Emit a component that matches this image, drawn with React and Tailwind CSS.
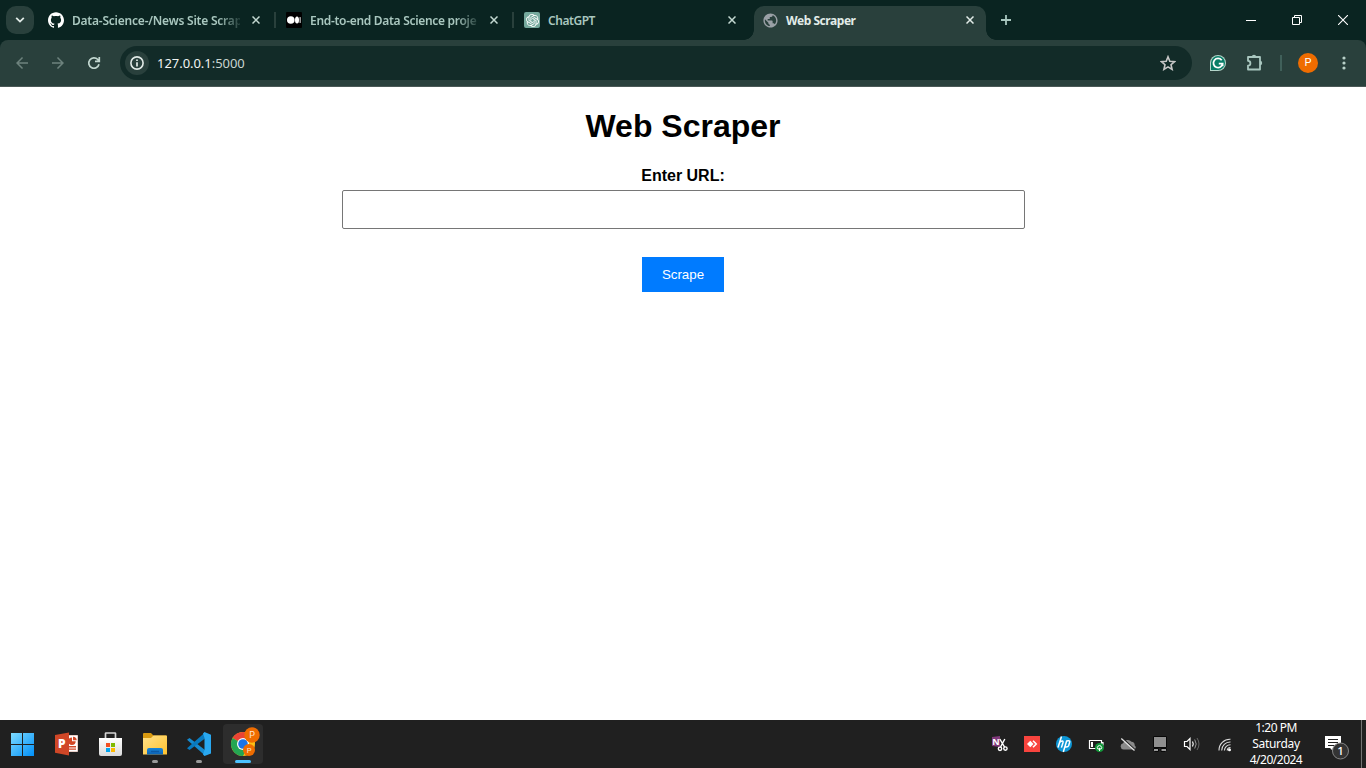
import React from 'react';
import { SiGithub, SiOpenai } from 'react-icons/si';
import { MdPublic, MdArrowBack, MdArrowForward } from 'react-icons/md';

const UI = "font-['Noto_Sans','Open_Sans',sans-serif]";

function Cross({ className }) {
  return (
    <svg width="8" height="8" viewBox="0 0 8 8" className={className}>
      <path d="M.5.5l7 7M7.5.5l-7 7" stroke="currentColor" strokeWidth="1.5" fill="none" />
    </svg>
  );
}

function Medium() {
  return (
    <svg width="16" height="16" viewBox="0 0 16 16">
      <rect width="16" height="16" rx="1" fill="#000" />
      <circle cx="4.8" cy="8" r="3.8" fill="#fff" />
      <ellipse cx="11" cy="8" rx="2" ry="3.6" fill="#fff" />
      <rect x="13.5" y="5" width="1.3" height="6" rx=".6" fill="#bbb" />
    </svg>
  );
}

function Tab({ icon, title, separator, titleClass }) {
  return (
    <div className="flex h-full w-[238px] items-center pl-[10px] text-[#a9c7bf]">
      <div className="flex size-4 shrink-0 items-center justify-center">{icon}</div>
      <div className={`mt-px ml-2 w-[168px] text-[12px] leading-[18px] font-semibold whitespace-nowrap ${titleClass}`}>{title}</div>
      <Cross className="ml-3 shrink-0 text-[#c3d8d1]" />
      <div className={`ml-[14px] h-4 w-[2px] shrink-0 ${separator ? 'bg-[#29403c]' : ''}`} />
    </div>
  );
}

function TabStrip() {
  return (
    <div className="flex h-10 shrink-0 bg-[#0a2421]">
      <div className="mt-[6px] mr-1 ml-[6px] flex size-7 items-center justify-center rounded-[10px] bg-[#29403c]">
        <svg width="10" height="6" viewBox="0 0 10 6"><path d="M1.2.8L5 4.6 8.8.8" fill="none" stroke="#e1eae7" strokeWidth="1.8" /></svg>
      </div>
      <Tab separator icon={<SiGithub size={16} color="#fff" />} title="Data-Science-/News Site Scrap" titleClass="tracking-[-0.22px] [mask-image:linear-gradient(to_right,black_146px,transparent_172px)]" />
      <Tab separator icon={<Medium />} title="End-to-end Data Science proje" titleClass="tracking-[-0.3px] [mask-image:linear-gradient(to_right,black_146px,transparent_172px)]" />
      <Tab icon={<div className="flex size-4 items-center justify-center rounded-[2px] bg-[#75a99d]"><SiOpenai size={13} color="#fff" /></div>} title="ChatGPT" titleClass="tracking-[-0.45px]" />
      <div className="mt-[6px] ml-[-8px] flex h-[34px] w-[252px] shrink-0">
        <div className="w-[10px] bg-[#29403c] [mask-image:radial-gradient(circle_at_0_24px,transparent_9.5px,black_10px)] [clip-path:inset(24px_0_0_0)]" />
        <div className="flex w-[232px] items-center rounded-t-[10px] bg-[#29403c] pb-[6px] pl-2">
          <MdPublic size={17} className="-ml-[0.5px] shrink-0 text-[#9aa0a6]" />
          <div className="mt-px ml-[7.5px] w-[168px] text-[12px] leading-[18px] font-bold tracking-[-0.45px] text-[#e2ece8]">Web Scraper</div>
          <Cross className="ml-3 text-[#e2ece8]" />
        </div>
        <div className="w-[10px] bg-[#29403c] [mask-image:radial-gradient(circle_at_10px_24px,transparent_9.5px,black_10px)] [clip-path:inset(24px_0_0_0)]" />
      </div>
      <div className="ml-[5px] flex w-[10px] items-center">
        <svg width="10" height="10" viewBox="0 0 10 10" className="shrink-0"><path d="M5 0v10M0 5h10" stroke="#a9c7bf" strokeWidth="1.8" /></svg>
      </div>
      <div className="ml-auto flex">
        <div className="flex w-[46px] items-center justify-center"><div className="h-px w-[10px] bg-white" /></div>
        <div className="flex w-[46px] items-center justify-center">
          <svg width="10" height="10" viewBox="0 0 10 10"><path d="M.5 2.5h7v7h-7zM2.5 2.5v-2h7v7h-2" fill="none" stroke="#fff" /></svg>
        </div>
        <div className="flex w-[46px] items-center justify-center">
          <svg width="10" height="10" viewBox="0 0 10 10"><path d="M0 0l10 10M10 0L0 10" stroke="#fff" strokeWidth="1.1" /></svg>
        </div>
      </div>
    </div>
  );
}

function Toolbar() {
  return (
    <div className="h-[47px] shrink-0 bg-[#0a2421]">
      <div className="flex h-full rounded-t-[8px] border-b border-[#4a5856] bg-[#29403c] pt-[6px]">
        <div className="flex h-[34px] w-[120px] items-center pl-[13px]">
          <MdArrowBack size={18} className="text-[#6d827d]" />
          <MdArrowForward size={18} className="ml-[18px] text-[#6d827d]" />
          <svg width="14" height="14" viewBox="0 0 14 14" className="ml-5">
            <path d="M12 8.3A5.2 5.2 0 1 1 10.8 3.5L12 4.8M12.3 1v4.4H8" fill="none" stroke="#c1d6cf" strokeWidth="1.7" />
          </svg>
        </div>
        <div className="flex h-[34px] w-[1072px] items-center rounded-full bg-[#122b28] pr-[16px] pl-[5px]">
          <div className="flex size-6 items-center justify-center rounded-full bg-[#29403c]">
            <svg width="14" height="14" viewBox="0 0 14 14"><circle cx="7" cy="7" r="6.1" fill="none" stroke="#e1eae7" strokeWidth="1.6" /><path d="M7 6.2v4.2M7 3.4v1.7" stroke="#e1eae7" strokeWidth="1.7" /></svg>
          </div>
          <div className="ml-2 text-[13px] leading-[18px] tracking-[-0.04px] text-[#f0f4f2]">127.0.0.1<span className="text-[#c9d5d1]">:5000</span></div>
          <svg width="16" height="16" viewBox="0 0 16 16" className="ml-auto">
            <path d="M8 1.8l1.8 4.4 4.8.4-3.6 3.1 1.1 4.7L8 11.9l-4.1 2.5L5 9.7 1.4 6.6l4.8-.4z" fill="none" stroke="#c7c7c7" strokeWidth="1.6" />
          </svg>
        </div>
        <div className="flex h-[34px] items-center">
          <svg width="16" height="16" viewBox="0 0 16 16" className="ml-[18px]">
            <path d="M0 16V8a8 8 0 1 1 8 8z" fill="#b4d5ca" />
            <path d="M1 15V8a7 7 0 1 1 7 7z" fill="#087d67" />
            <path d="M11.7 5.2A4.6 4.6 0 1 0 12.6 8.6H8.8M12.6 8.5v2.7" fill="none" stroke="#fff" strokeWidth="1.8" />
          </svg>
          <svg width="18" height="18" viewBox="0 0 18 18" className="ml-5">
            <path d="M2 3H14V15.5H2V11.6A2.4 2.4 0 0 0 2 6.8z" fill="none" stroke="#a9c7bf" strokeWidth="1.8" strokeLinejoin="round" />
            <path d="M5.8 3a2.2 2.2 0 0 1 4.4 0zM14 6.8a2.2 2.2 0 0 1 0 4.4z" fill="#a9c7bf" />
          </svg>
          <div className="ml-4 h-4 w-[2px] bg-[#40605a]" />
          <div className="ml-4 flex size-5 items-center justify-center rounded-full bg-[#ef6c00] pt-px font-[Roboto,sans-serif] text-[11px] text-white">P</div>
          <svg width="4" height="14" viewBox="0 0 4 14" className="ml-6 text-[#b8d0c8]" fill="currentColor"><circle cx="2" cy="2" r="1.6" /><circle cx="2" cy="7" r="1.6" /><circle cx="2" cy="12" r="1.6" /></svg>
        </div>
      </div>
    </div>
  );
}

function Page() {
  return (
    <main className="flex min-h-0 flex-1 flex-col items-center bg-white font-['Liberation_Sans',Arial,sans-serif] text-black">
      <h1 className="mt-[21px] text-[32px] leading-[37px] font-bold">Web Scraper</h1>
      <label htmlFor="url" className="mt-[22px] text-[16px] leading-[18px] font-bold">Enter URL:</label>
      <input id="url" className="mt-[5px] ml-px h-[39px] w-[683px] rounded-[2px] border border-[#767676] px-[10px]" />
      <button className="mt-7 h-[35px] w-[82px] bg-[#007bff] text-[13.333px] text-white">Scrape</button>
    </main>
  );
}

function StartIcon() {
  return (
    <svg width="24" height="24" viewBox="0 0 24 24">
      <defs><linearGradient id="start" gradientUnits="userSpaceOnUse" x1="0" y1="0" x2="24" y2="24"><stop stopColor="#83deff" /><stop offset="1" stopColor="#008ff8" /></linearGradient></defs>
      <path d="M1 1h11v11H1zM13 1h11v11H13zM1 13h11v11H1zM13 13h11v11H13z" fill="url(#start)" />
    </svg>
  );
}

function PowerPointIcon() {
  return (
    <svg width="24" height="24" viewBox="0 0 24 24">
      <path d="M12 3.5h11.5v16H12z" fill="#fff" stroke="#e9cfc8" />
      <path d="M18 5.5a3.7 3.7 0 1 0 3.7 3.7H18z" fill="#d24726" />
      <path d="M19 4.7v3.6h3.7A3.7 3.7 0 0 0 19 4.7zM14 14h8v1.4h-8zM14 16.5h8v1.3h-8z" fill="#d24726" />
      <path d="M1 3l14-2.6v23L1 20.7z" fill="#d04727" />
      <text x="4" y="16" fontFamily="Open Sans" fontSize="12" fontWeight="800" fill="#fff">P</text>
    </svg>
  );
}

function StoreIcon() {
  return (
    <svg width="24" height="26" viewBox="0 0 24 26">
      <defs><linearGradient id="bag" x1="0" y1="0" x2="0" y2="1"><stop stopColor="#fff" /><stop offset="1" stopColor="#dadada" /></linearGradient></defs>
      <path d="M7.5 8V2.5Q7.5 2 8 2h9q.5 0 .5.5V8" fill="none" stroke="#d5d5d5" strokeWidth="1.7" />
      <path d="M1 7h23v16a2 2 0 0 1-2 2H3a2 2 0 0 1-2-2z" fill="url(#bag)" />
      <path d="M8 12h4v4H8z" fill="#f25022" /><path d="M13 12h4v4h-4z" fill="#7fba00" />
      <path d="M8 17h4v4H8z" fill="#00a4ef" /><path d="M13 17h4v4h-4z" fill="#ffb900" />
    </svg>
  );
}

function FolderIcon() {
  return (
    <svg width="26" height="24" viewBox="0 0 26 24">
      <defs>
        <linearGradient id="fold" x1="0" y1="0" x2="1" y2="1"><stop stopColor="#ffe18a" /><stop offset="1" stopColor="#ffc22e" /></linearGradient>
        <linearGradient id="slot" x1="0" y1="0" x2="0" y2="1"><stop stopColor="#1686d9" /><stop offset="1" stopColor="#0d62b4" /></linearGradient>
      </defs>
      <path d="M2 2q0-1 1-1h7l2.5 2.5H25q1 0 1 1V12H2z" fill="#d99a10" />
      <path d="M2 6h8l2.5-2.5H25q1 0 1 1V22.5H2z" fill="url(#fold)" />
      <path d="M6 22.5V18q0-2 2-2h12q2 0 2 2v4.5z" fill="url(#slot)" />
      <path d="M10 19.5h8" stroke="#0b58a4" strokeWidth="1.4" />
    </svg>
  );
}

function CodeIcon() {
  return (
    <svg width="26" height="26" viewBox="0 0 26 26">
      <path d="M2 8.8L4.5 7l15.5 12v5.5z" fill="#168bd0" />
      <path d="M2 17.2L4.5 19 20 7.5V1.5z" fill="#087abf" />
      <path d="M19.5 1L26 3.7v18.7L19.5 25 18 23.5l1.5-4.5V7L18 2.5z" fill="#29a8f0" />
    </svg>
  );
}

function ChromeIcon() {
  return (
    <svg width="40" height="40" viewBox="0 0 40 40">
      <circle cx="20" cy="20" r="12" fill="#fbc116" />
      <path d="M20 20L9.6 14A12 12 0 0 1 30.4 14z" fill="#ea4335" />
      <path d="M20 20L9.6 14A12 12 0 0 0 20 32l4.8-9z" fill="#24a653" />
      <circle cx="20" cy="20" r="6" fill="#fff" /><circle cx="20" cy="20" r="4.8" fill="#1a73e8" />
      <circle cx="29" cy="11" r="7.7" fill="#ef6c00" />
      <circle cx="26" cy="26" r="6" fill="#ef6c00" />
      <g fill="#ffe6d2" fontFamily="Roboto" textAnchor="middle"><text x="29" y="14.3" fontSize="9">P</text><text x="26" y="28.8" fontSize="7.5">P</text></g>
    </svg>
  );
}

function TaskItem({ children, marker }) {
  return (
    <div className="relative flex h-full w-11 items-center justify-center">
      {children}
      {marker && <div className="absolute bottom-[5px] left-[20px] h-[3px] w-[6px] rounded-full bg-[#9a9a9a]" />}
    </div>
  );
}

function TrayItem({ children }) {
  return <div className="flex w-8 items-center justify-center"><svg width="18" height="18" viewBox="0 0 18 18">{children}</svg></div>;
}

function Tray() {
  return (
    <div className="ml-auto flex h-full">
      <TrayItem>
        <path d="M1 2l8-1v11l-8-1z" fill="#80397b" />
        <text x="1.2" y="9.7" fontFamily="Open Sans" fontSize="9" fontWeight="700" fill="#fff">N</text>
        <g fill="none" stroke="#fff" strokeWidth="1.4"><path d="M13.8 4L9.5 12.2M8.8 4l4.8 8.2" /><circle cx="9" cy="13.8" r="1.7" /><circle cx="14.4" cy="13.6" r="1.7" /></g>
      </TrayItem>
      <TrayItem><path d="M1 1h16v16H1z" fill="#f8443e" /><path d="M7.3 5.7L10.5 9l-3.2 3.3L4 9z" fill="#fff" /><path d="M10 5.8L13.2 9 10 12.2" fill="none" stroke="#fff" strokeWidth="1.6" /></TrayItem>
      <TrayItem><circle cx="9" cy="9" r="8" fill="#0c96d6" /><path d="M6.5 1.5L3 12.6M4.9 7q3.6-2.3 3.1.5l-1.6 5.1M11.7 5.8L8.3 17M11.4 6q4.2-1 3.2 1.5l-1 3.3q-.6 1.4-3.7 1" fill="none" stroke="#fff" strokeWidth="1.5" /></TrayItem>
      <TrayItem><path d="M2.5 5.5h12v8h-12zM14.5 7.5H16v3" fill="none" stroke="#fff" strokeWidth="1.2" /><path d="M4 7h2v5H4z" fill="#fff" /><circle cx="12.5" cy="12.5" r="4.5" fill="#12983a" /><path d="M12.5 16v-3.2M10.9 14a2.1 2.1 0 1 1 3.2 0z" fill="none" stroke="#fff" /></TrayItem>
      <TrayItem><path d="M4.5 14.5a3.2 3.2 0 0 1-.4-6.3 4.9 4.9 0 0 1 8.4-1.5 3.6 3.6 0 0 1 3.2 3.7q2.5 2.5-.5 4.1z" fill="#8a8a8a" /><path d="M3 2.8L16 14.8" stroke="#202020" strokeWidth="1.4" /><path d="M2.3 3.4L15.5 15.6" stroke="#e3e3e3" strokeWidth="1.3" /></TrayItem>
      <TrayItem><path d="M2.5 1.5h13v11h-13z" fill="#8f8f8f" stroke="#080808" /><path d="M2.5 13.5h5v3h-4q-1 0-1-1zM10 13.5h5.5v2q0 1-1 1H10z" fill="#999" stroke="#080808" /></TrayItem>
      <TrayItem><path d="M1.5 6.5H4l3-3v11l-3-3H1.5z" fill="none" stroke="#fff" strokeWidth="1.2" /><path d="M9.5 6.5q1.5 2.5 0 5" fill="none" stroke="#fff" strokeWidth="1.2" /><path d="M11.7 4.5q3 4.5 0 9" fill="none" stroke="#999" /><path d="M14 3q4 6 0 12" fill="none" stroke="#666" /></TrayItem>
      <TrayItem><g fill="none" stroke="#ddd" strokeWidth="1.1"><path d="M4 15.5A11 11 0 0 1 15.5 4.2M6.7 15.5A8.4 8.4 0 0 1 15.5 7M9.4 15.5a6 6 0 0 1 6.1-5.7" /><path d="M12.2 15.5a3.2 3.2 0 0 1 3.3-3" /></g><circle cx="14.5" cy="14.8" r="1.5" fill="#fff" /></TrayItem>
      <div className="w-[72px] text-center text-[12px] leading-4 tracking-[-0.5px] text-white"><div>1:20 PM</div><div className="tracking-[-0.3px]">Saturday</div><div>4/20/2024</div></div>
      <div className="flex w-[49px] items-center pl-[12px]">
        <svg width="27" height="32" viewBox="0 0 27 32">
          <path d="M1 8h16v12H9v3l-3-3H1z" fill="#fff" />
          <path d="M4 11.5h10M4 14.5h10M4 17.5h6" stroke="#202020" />
          <circle cx="16.5" cy="23" r="8" fill="#343434" stroke="#858585" />
          <text x="16.5" y="27" textAnchor="middle" fontFamily="Noto Sans" fontSize="11.5" fontWeight="500" fill="#fff">1</text>
        </svg>
      </div>
      <div className="mr-1 w-px bg-[#737373]" />
    </div>
  );
}

function Taskbar() {
  return (
    <div className="flex h-12 shrink-0 bg-[#202020]">
      <TaskItem><StartIcon /></TaskItem>
      <TaskItem><PowerPointIcon /></TaskItem>
      <TaskItem><StoreIcon /></TaskItem>
      <TaskItem marker><FolderIcon /></TaskItem>
      <TaskItem marker><CodeIcon /></TaskItem>
      <div className="relative mt-1 ml-[3px] size-10 rounded bg-[#2d2d2d]"><ChromeIcon /><div className="absolute bottom-px left-3 h-[3px] w-4 rounded-full bg-[#4cc2ff]" /></div>
      <Tray />
    </div>
  );
}

export default function App() {
  return (
    <div className={`flex h-[768px] w-[1366px] flex-col overflow-hidden ${UI}`}>
      <TabStrip />
      <Toolbar />
      <Page />
      <Taskbar />
    </div>
  );
}
